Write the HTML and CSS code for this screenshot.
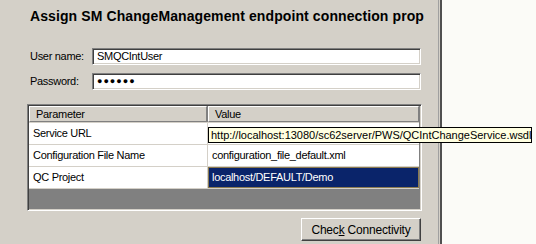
FILE: index.html
```html
<!DOCTYPE html>
<html lang="en">
<head>
    <meta charset="UTF-8">
    <title>Assign SM ChangeManagement endpoint connection properties</title>
    <link rel="stylesheet" href="styles.css">
</head>
<body>
    <div class="panel">
        <h1 class="title">Assign SM ChangeManagement endpoint connection prop</h1>

        <div class="form">
            <label class="label" for="user">User name:</label>
            <div class="input">SMQCIntUser</div>
            <label class="label" for="pass">Password:</label>
            <div class="input password">&#9679;&#9679;&#9679;&#9679;&#9679;&#9679;</div>
        </div>

        <div class="grid">
            <div class="head">
                <div class="head-cell">Parameter</div>
                <div class="head-cell">Value</div>
            </div>
            <div class="rows">
                <div class="cell">Service URL</div>
                <div class="cell"></div>
                <div class="cell">Configuration File Name</div>
                <div class="cell">configuration_file_default.xml</div>
                <div class="cell">QC Project</div>
                <div class="cell selected">localhost/DEFAULT/Demo</div>
            </div>
            <div class="tooltip">http://localhost:13080/sc62server/PWS/QCIntChangeService.wsdl</div>
        </div>

        <div class="actions">
            <button class="button">Chec<u>k</u> Connectivity</button>
        </div>
    </div>
    <div class="splitter"></div>
    <div class="side"></div>
</body>
</html>
```

FILE: styles.css
```css
html, body {
    margin: 0;
    height: 244px;
    overflow: hidden;
}
body {
    display: flex;
    font-family: 'Liberation Sans', Arial, sans-serif;
    font-size: 11px;
    letter-spacing: -0.3px;
    color: #000;
    background: #d4d0c8;
}
.panel {
    width: 411px;
    padding: 0 0 0 27px;
    position: relative;
}
.title {
    margin: 8px 0 0 3px;
    font-size: 14px;
    line-height: 16px;
    font-weight: bold;
    white-space: nowrap;
    letter-spacing: 0.1px;
}
.form {
    display: grid;
    grid-template-columns: 62px 329px;
    row-gap: 6px;
    margin: 23px 0 0 3px;
    align-items: center;
}
.label {
    line-height: 19px;
}
.input {
    height: 15px;
    line-height: 15px;
    padding: 0 4px;
    background: #fff;
    border-top: 1px solid #808080;
    border-left: 1px solid #808080;
    border-right: 1px solid #fff;
    border-bottom: 1px solid #fff;
    box-shadow: inset 1px 1px 0 #404040, inset -1px -1px 0 #d4d0c8;
}
.password {
    font-size: 9px;
    letter-spacing: 1px;
}
.grid {
    position: relative;
    height: 103px;
    margin-top: 13px;
    width: 390px;
    background: #808080;
    border-top: 1px solid #808080;
    border-left: 1px solid #808080;
    border-right: 1px solid #fff;
    border-bottom: 1px solid #fff;
    box-shadow: inset 1px 1px 0 #404040, inset -1px -1px 0 #d4d0c8;
    padding: 1px 2px 1px 1px;
}
.head {
    display: grid;
    grid-template-columns: 178px 1fr;
    column-gap: 1px;
}
.head-cell {
    height: 14px;
    line-height: 14px;
    padding-left: 6px;
    background: #d4d0c8;
    border-top: 1px solid #fff;
    border-left: 1px solid #fff;
    border-bottom: 1px solid #808080;
    border-right: 1px solid #808080;
}
.rows {
    display: grid;
    grid-template-columns: 178px 1fr;
    gap: 1px;
    background: #d4d0c8;
    padding: 1px 0;
}
.cell {
    height: 21px;
    line-height: 21px;
    padding-left: 4px;
    background: #fff;
    white-space: nowrap;
    overflow: hidden;
}
.selected {
    background: #0a246a;
    color: #fff;
    box-shadow: inset 0 0 0 1px #8a7a50;
}
.tooltip {
    position: absolute;
    left: 180px;
    top: 22px;
    width: 318px;
    height: 14px;
    line-height: 14px;
    padding: 0 2px;
    background: #ffffe1;
    border: 1px solid #000;
    white-space: nowrap;
    font-size: 11px;
    letter-spacing: -0.02px;
    z-index: 2;
}
.actions {
    display: flex;
    justify-content: flex-end;
    width: 394px;
    margin-top: 7px;
}
.button {
    width: 120px;
    height: 23px;
    padding: 0;
    font-family: 'Liberation Sans', Arial, sans-serif;
    font-size: 12px;
    letter-spacing: -0.2px;
    color: #000;
    background: #d4d0c8;
    border-top: 1px solid #fff;
    border-left: 1px solid #fff;
    border-right: 1px solid #404040;
    border-bottom: 1px solid #404040;
    box-shadow: inset -1px -1px 0 #808080;
}
.splitter {
    width: 1px;
    border-left: 1px solid #a0a0a0;
    border-right: 2px solid #505050;
}
.side {
    flex: 1;
    background: #fbfbf7;
}
```
